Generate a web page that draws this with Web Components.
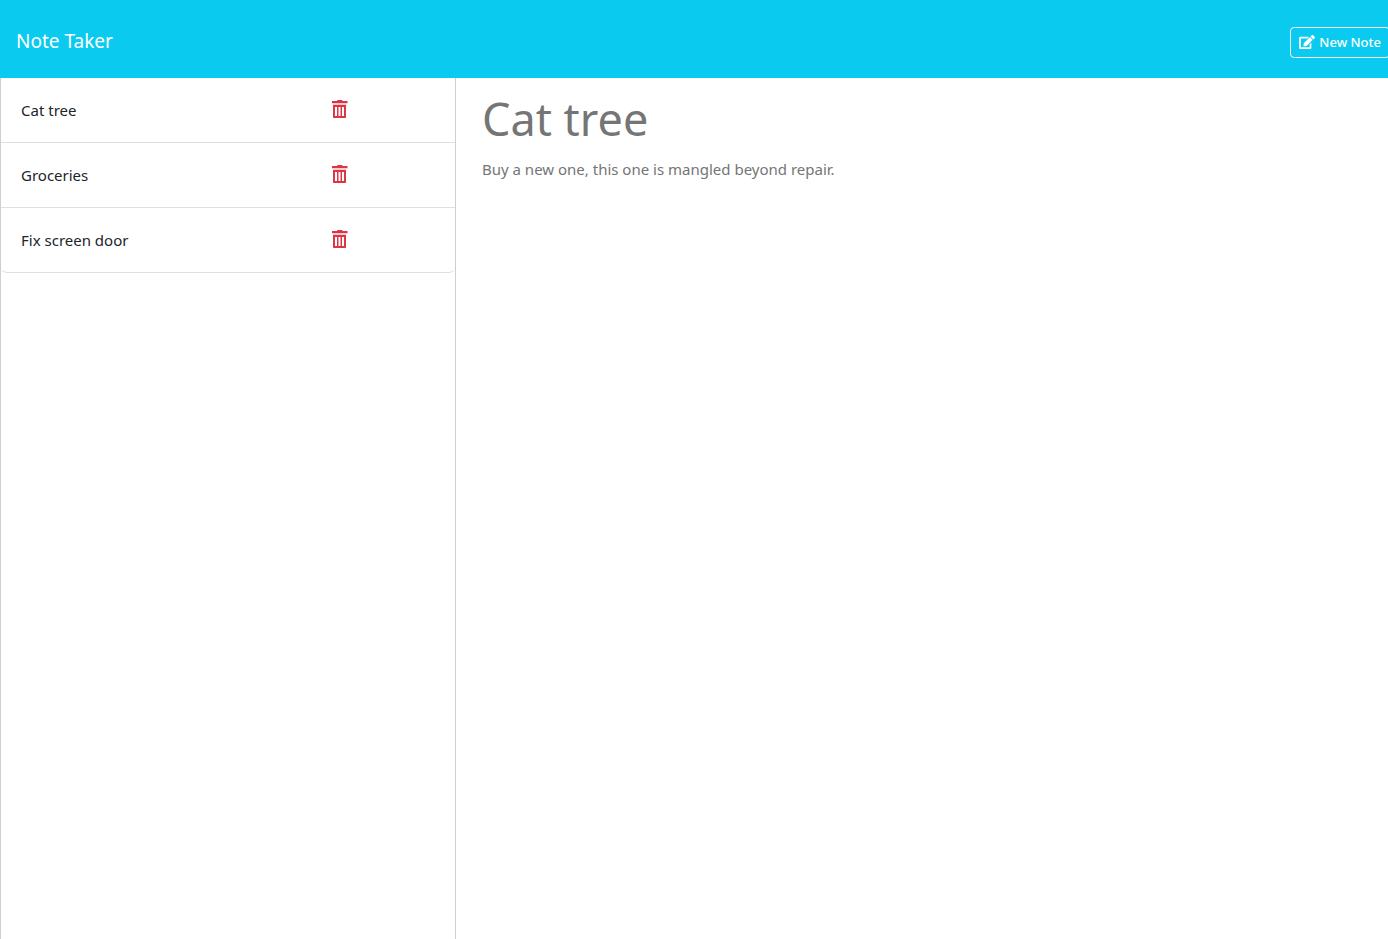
<!DOCTYPE html>
<html lang="en">
<head>
<meta charset="utf-8">
<meta name="viewport" content="width=device-width, initial-scale=1">
<title>Note Taker</title>
<style>
html, body { margin: 0; height: 100%; }
body { font: 15px/24px "Noto Sans", "Open Sans", sans-serif; color: #212529; background: #fff; }
</style>
</head>
<body>
<note-app></note-app>
<script>
class BaseElement extends HTMLElement {
  constructor() {
    super();
    this.attachShadow({ mode: "open" }).innerHTML = this.constructor.markup;
  }
}

customElements.define("note-navbar", class extends BaseElement {
  static markup = `
    <style>
      :host { display: block; background: #0acaf0; color: #fff; overflow: hidden; }
      nav { display: flex; align-items: center; justify-content: space-between; box-sizing: border-box; min-height: 78px; padding: 4px 0 0 16px; }
      a { color: inherit; text-decoration: none; font-size: 19px; line-height: 32px; }
      button { display: flex; align-items: center; gap: 4px; box-sizing: border-box; height: 31px; padding: 0 8px; margin: 2px -2px 0 0;
        font: 500 13px/20px "Noto Sans", "Open Sans", sans-serif; color: #fff; background: transparent; border: 1px solid #f8f9fa; border-radius: 4px; }
      svg { width: 16px; height: 14px; fill: currentColor; }
    </style>
    <nav>
      <a href="#"><slot></slot></a>
      <button type="button">
        <svg viewBox="0 0 576 512" aria-hidden="true"><path d="M402.600 83.200l90.200 90.200c3.800 3.800 3.800 10 0 13.800L274.400 405.600l-92.800 10.300c-12.400 1.400-22.900-9.100-21.500-21.500l10.300-92.800L388.800 83.200c3.800-3.800 10-3.800 13.800 0zm162-22.900l-48.800-48.800c-15.200-15.200-39.900-15.200-55.200 0l-35.400 35.400c-3.800 3.800-3.800 10 0 13.800l90.200 90.200c3.800 3.800 10 3.800 13.800 0l35.400-35.400c15.200-15.300 15.200-40 0-55.200zM384 346.200V448H64V128h229.800c3.200 0 6.200-1.300 8.500-3.500l40-40c7.600-7.600 2.200-20.500-8.500-20.500H48C21.500 64 0 85.500 0 112v352c0 26.500 21.500 48 48 48h352c26.500 0 48-21.500 48-48V306.200c0-10.700-12.900-16-20.500-8.500l-40 40c-2.200 2.300-3.500 5.300-3.500 8.500z"/></svg>
        <span>New Note</span>
      </button>
    </nav>`;
});

customElements.define("note-item", class extends BaseElement {
  static markup = `
    <style>
      :host { display: grid; grid-template-columns: 3fr 1fr; align-items: center; padding: 20px; border-bottom: 1px solid #dfdfdf; background: #fff; }
      :host(:last-of-type) { border-radius: 0 0 6px 6px; }
      a { color: inherit; text-decoration: none; }
      button { display: flex; justify-self: start; padding: 0; margin: 0 0 2px; border: 0; background: none; color: #dc3545; }
      svg { width: 17px; height: 18px; fill: currentColor; }
    </style>
    <a href="#"><slot></slot></a>
    <button type="button" aria-label="Delete note">
      <svg viewBox="0 0 17 18" aria-hidden="true"><path fill-rule="evenodd" d="M6.500 0h4.500l.5 1h5v2.300H1V1h5zM2 4.700h13v12.500q0 .8-.8.800H2.800Q2 18 2 17.200zM4 7v9h2V7zM7.500 7v9h2V7zM11 7v9h2V7z"/></svg>
    </button>`;
});

customElements.define("note-list", class extends BaseElement {
  static markup = `
    <style>
      :host { display: block; box-sizing: border-box; border: solid #cfcfcf; border-width: 0 1px; }
    </style>
    <slot></slot>`;
});

customElements.define("note-editor", class extends BaseElement {
  static markup = `
    <style>
      :host { display: block; min-width: 0; padding: 8px 26px; }
      input, textarea { display: block; box-sizing: border-box; width: 100%; margin: 0; padding: 0; border: 0; outline: 0; background: none; color: #757575; font-family: inherit; resize: none; }
      input { height: 66px; font-size: 45px; line-height: 66px; }
      textarea { margin-top: 5px; font-size: 15px; line-height: 24px; }
    </style>
    <input type="text" aria-label="Note title" value="Cat tree" readonly>
    <textarea aria-label="Note text" rows="8" readonly>Buy a new one, this one is mangled beyond repair.</textarea>`;
});

customElements.define("note-app", class extends BaseElement {
  static markup = `
    <style>
      :host { display: flex; flex-direction: column; min-height: 100%; }
      main { display: grid; grid-template-columns: calc((100% - 20px) / 3) 1fr; flex: 1; }
    </style>
    <note-navbar>Note Taker</note-navbar>
    <main>
      <note-list>
        <note-item>Cat tree</note-item>
        <note-item>Groceries</note-item>
        <note-item>Fix screen door</note-item>
      </note-list>
      <note-editor></note-editor>
    </main>`;
});
</script>
</body>
</html>
